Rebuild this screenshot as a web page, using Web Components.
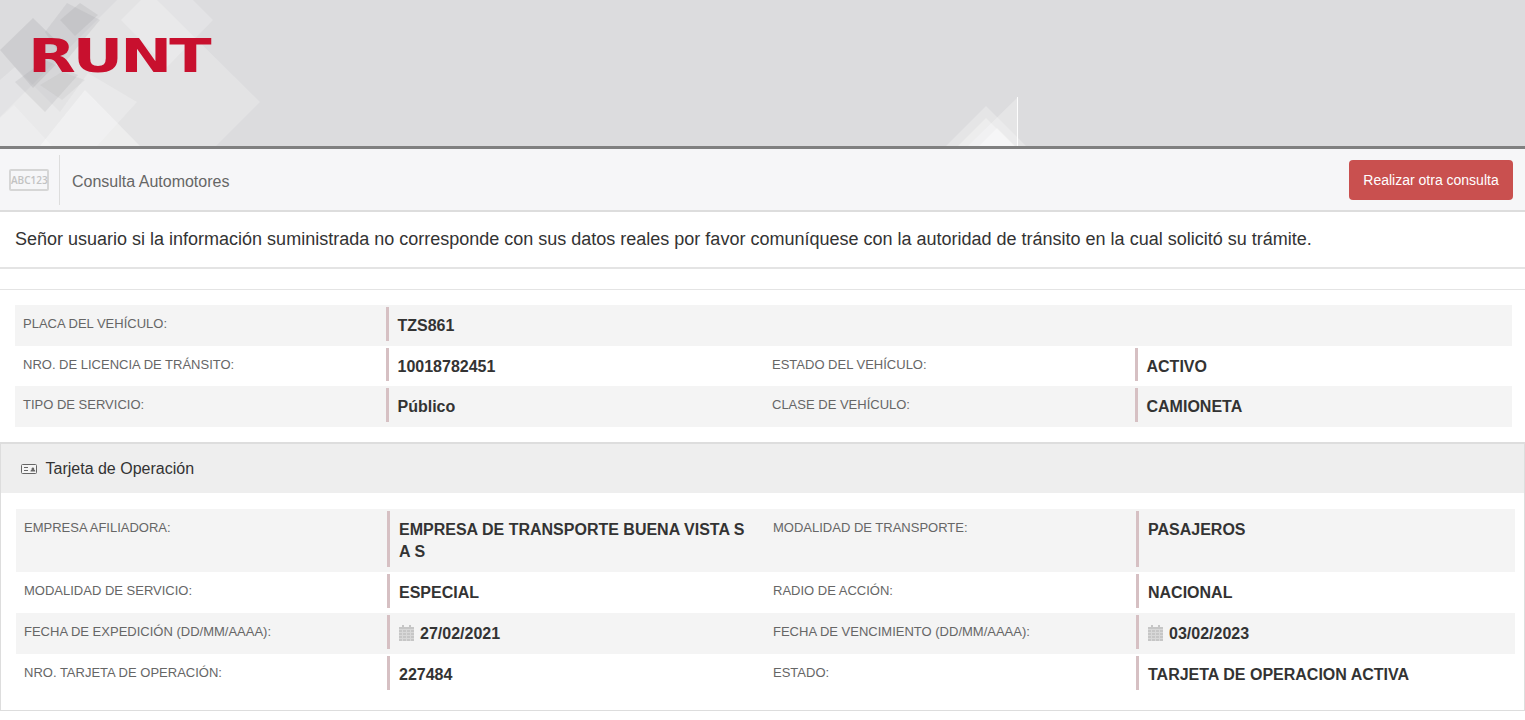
<!DOCTYPE html>
<html lang="es">
<head>
<meta charset="utf-8">
<title>Consulta Automotores</title>
<style>
html, body { margin: 0; padding: 0; background: #fff; font-family: "Liberation Sans", Arial, sans-serif; color: #333; }
.top-list { display: block; padding: 14.7px 13px 15px 15px; --value-pad: 8.5px; }
</style>
</head>
<body>
<runt-header></runt-header>
<sub-bar></sub-bar>
<notice-box>Señor usuario si la información suministrada no corresponde con sus datos reales por favor comuníquese con la autoridad de tránsito en la cual solicitó su trámite.</notice-box>
<data-list class="top-list">
  <data-row shade>
    <data-field label="PLACA DEL VEHÍCULO:">TZS861</data-field>
  </data-row>
  <data-row>
    <data-field label="NRO. DE LICENCIA DE TRÁNSITO:">10018782451</data-field>
    <data-field label="ESTADO DEL VEHÍCULO:">ACTIVO</data-field>
  </data-row>
  <data-row shade>
    <data-field label="TIPO DE SERVICIO:">Público</data-field>
    <data-field label="CLASE DE VEHÍCULO:">CAMIONETA</data-field>
  </data-row>
</data-list>
<card-panel heading="Tarjeta de Operación">
  <data-list>
    <data-row shade>
      <data-field label="EMPRESA AFILIADORA:">EMPRESA DE TRANSPORTE BUENA VISTA S A S</data-field>
      <data-field label="MODALIDAD DE TRANSPORTE:">PASAJEROS</data-field>
    </data-row>
    <data-row>
      <data-field label="MODALIDAD DE SERVICIO:">ESPECIAL</data-field>
      <data-field label="RADIO DE ACCIÓN:">NACIONAL</data-field>
    </data-row>
    <data-row shade>
      <data-field label="FECHA DE EXPEDICIÓN (DD/MM/AAAA):"><cal-icon></cal-icon>27/02/2021</data-field>
      <data-field label="FECHA DE VENCIMIENTO (DD/MM/AAAA):"><cal-icon></cal-icon>03/02/2023</data-field>
    </data-row>
    <data-row>
      <data-field label="NRO. TARJETA DE OPERACIÓN:">227484</data-field>
      <data-field label="ESTADO:">TARJETA DE OPERACION ACTIVA</data-field>
    </data-row>
  </data-list>
</card-panel>

<script>
class RuntHeader extends HTMLElement {
    constructor() {
        super();
        this.shadowDOM = this.attachShadow({ mode: 'open' });
    }

    connectedCallback() {
        this.shadowDOM.innerHTML = `
      <style>
      :host { display: block; position: relative; height: 146px; background: #dcdcde; border-bottom: 3px solid #808080; overflow: hidden; }
      svg { position: absolute; left: 0; top: 0; }
      .logo { position: absolute; left: 28px; top: 27px; margin: 0; color: #c8102e; font: 700 46px/58px "DejaVu Sans", sans-serif;
        letter-spacing: -2.2px; transform-origin: 0 0; transform: scaleX(1.35); white-space: nowrap; }
      </style>
      <svg width="1100" height="146" viewBox="0 0 1100 146">
        <g fill="#ffffff">
          <polygon fill-opacity=".2" points="117,0 157,0 260,102 216,146 0,146 0,117"/>
          <polygon fill-opacity=".22" points="167,-26 213,20 167,67 121,20"/>
          <polygon fill-opacity=".22" points="15,67 60,112 88,73 137,102 97,146 0,146 0,80"/>
          <polygon fill-opacity=".35" points="85,90 140,146 40,146"/>
          <polygon fill-opacity=".2" points="14,105 52,146 0,146 0,118"/>
        </g>
        <g fill="#9c9c9e">
          <polygon fill-opacity=".22" points="33,18 68,52 33,88 0,50"/>
          <polygon fill-opacity=".18" points="67,3 100,20 65,62 45,32"/>
          <polygon fill-opacity=".2" points="80,3 98,15 75,36 60,20"/>
          <polygon fill-opacity=".18" points="45,60 78,75 45,112 15,82"/>
          <polygon fill-opacity=".12" points="62,72 85,80 62,100 40,85"/>
        </g>
        <g fill="#ffffff">
          <polygon fill-opacity=".25" points="986,106 1026,146 946,146"/>
          <polygon fill-opacity=".25" points="1018,97 1018,146 968,146"/>
          <polygon fill-opacity=".3" points="986,118 1014,146 958,146"/>
          <polygon fill-opacity=".4" points="997,128 1015,146 979,146"/>
          <rect x="1017" y="97" width="1" height="49" fill-opacity=".9"/>
        </g>
      </svg>
      <div class="logo">RUNT</div>
    `;
    }
}
customElements.define('runt-header', RuntHeader);

class SubBar extends HTMLElement {
    constructor() {
        super();
        this.shadowDOM = this.attachShadow({ mode: 'open' });
    }

    connectedCallback() {
        this.shadowDOM.innerHTML = `
      <style>
      :host { display: flex; align-items: center; height: 60px; padding: 1px 12px 0 0; background: #f6f6f8; border-bottom: 2px solid #dddddd; }
      .plate-wrap { display: flex; align-items: center; justify-content: center; width: 59px; height: 50px; border-right: 1px solid #dddddd; }
      .plate { width: 36px; height: 18px; border: 2px solid #d6d6d6; border-radius: 2px; font: 600 10px/18px "Open Sans", sans-serif; color: #c2c2c2; text-align: center; margin-right: 1px; }
      .title { flex: 1; padding: 3px 0 0 12px; font-size: 16px; color: #666; }
      button { width: 164px; height: 40px; padding: 0; border: 0; border-radius: 4px; background: #c9504f; color: #fff; font: 14px "Liberation Sans", sans-serif; }
      </style>
      <div class="plate-wrap"><div class="plate">ABC123</div></div>
      <div class="title">Consulta Automotores</div>
      <button>Realizar otra consulta</button>
    `;
    }
}
customElements.define('sub-bar', SubBar);

class NoticeBox extends HTMLElement {
    constructor() {
        super();
        this.shadowDOM = this.attachShadow({ mode: 'open' });
    }

    connectedCallback() {
        this.shadowDOM.innerHTML = `
      <style>
      :host { display: block; }
      .msg { height: 55px; padding: 0 15px; border-bottom: 2px solid #e4e4e4; font-size: 18px; line-height: 55px; color: #333; white-space: nowrap; }
      .gap { height: 20px; border-bottom: 1px solid #e4e4e4; }
      </style>
      <div class="msg"><slot></slot></div>
      <div class="gap"></div>
    `;
    }
}
customElements.define('notice-box', NoticeBox);

class DataList extends HTMLElement {
    constructor() {
        super();
        this.shadowDOM = this.attachShadow({ mode: 'open' });
        this.shadowDOM.innerHTML = `
      <style>
      :host { display: block; }
      </style>
      <slot></slot>
    `;
    }
}
customElements.define('data-list', DataList);

class DataRow extends HTMLElement {
    constructor() {
        super();
        this.shadowDOM = this.attachShadow({ mode: 'open' });
        this.shadowDOM.innerHTML = `
      <style>
      :host { display: grid; grid-template-columns: 749px 1fr; padding: 2px 0 5px; }
      :host([shade]) { background: #f4f4f4; }
      </style>
      <slot></slot>
    `;
    }
}
customElements.define('data-row', DataRow);

class DataField extends HTMLElement {
    constructor() {
        super();
        this.shadowDOM = this.attachShadow({ mode: 'open' });
    }

    connectedCallback() {
        this.shadowDOM.innerHTML = `
      <style>
      :host { display: grid; grid-template-columns: 371px 1fr; }
      .label { padding: 8px 8px 0; font-size: 13px; line-height: 18px; color: #666; }
      .value { padding: 8px 10px 3px var(--value-pad, 9px); border-left: 3px solid #d6c0c3; font-size: 16px; line-height: 1.42857; font-weight: 700; color: #333; }
      </style>
      <div class="label">${this.getAttribute('label')}</div>
      <div class="value"><slot></slot></div>
    `;
    }
}
customElements.define('data-field', DataField);

class CalIcon extends HTMLElement {
    constructor() {
        super();
        this.shadowDOM = this.attachShadow({ mode: 'open' });
        this.shadowDOM.innerHTML = `
      <style>
      :host { display: inline-block; width: 15px; height: 16px; margin-right: 6px; vertical-align: -2px; }
      svg { display: block; }
      </style>
      <svg width="15" height="16" viewBox="0 0 15 16">
        <path fill="#c6c6c6" d="M3 0h2v2h5V0h2v2h3v14H0V2h3z"/>
        <path fill="none" stroke="#d8d8d8" d="M0 4.500h15M0 7.500h15M0 10.500h15M0 13.500h15M3.500 5v11M7.500 5v11M11.500 5v11"/>
      </svg>
    `;
    }
}
customElements.define('cal-icon', CalIcon);

class CardPanel extends HTMLElement {
    constructor() {
        super();
        this.shadowDOM = this.attachShadow({ mode: 'open' });
    }

    connectedCallback() {
        this.shadowDOM.innerHTML = `
      <style>
      :host { display: block; border: 1px solid #dddddd; border-top-width: 2px; }
      .head { box-sizing: border-box; display: flex; align-items: center; height: 49px; padding: 0 0 0 20px; background: #eeeeee; font-size: 16px; color: #333; }
      .head svg { margin: 0 8.5px 0 0; }
      .body { padding: 15.4px 9px 15.3px 15px; }
      </style>
      <div class="head">
        <svg width="16" height="12" viewBox="0 0 16 12">
          <rect x=".5" y="1.5" width="15" height="9" rx="1" fill="#f4f4f4" stroke="#666"/>
          <path fill="none" stroke="#666" d="M3 4.500h4M3 7.500h4"/>
          <path fill="#666" d="M9.500 8.500c0-1.500 1-2 1.500-2-.6-.4-.6-2 .9-2s1.500 1.600.9 2c.5 0 1.500.5 1.500 2z"/>
        </svg>
        ${this.getAttribute('heading')}
      </div>
      <div class="body"><slot></slot></div>
    `;
    }
}
customElements.define('card-panel', CardPanel);
</script>
</body>
</html>
